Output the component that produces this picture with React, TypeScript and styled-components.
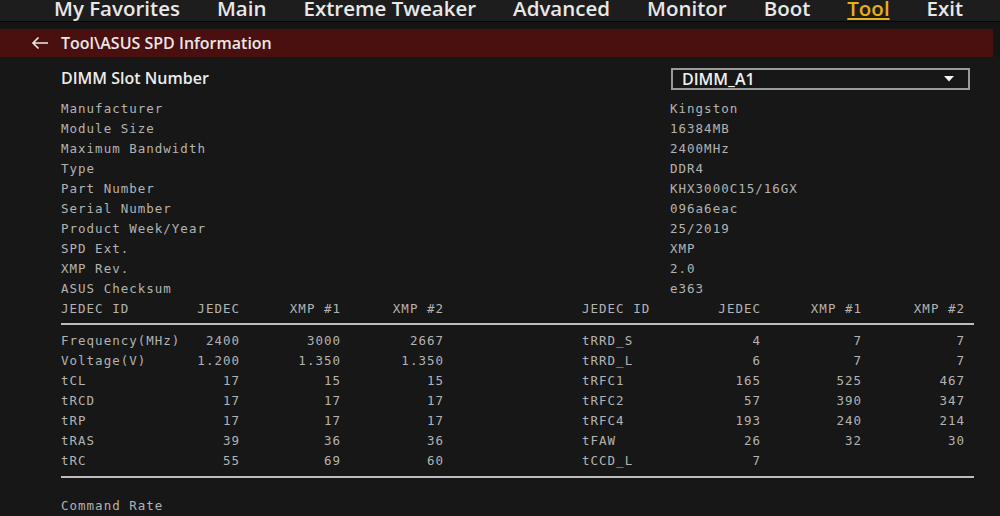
import React from "react";
import styled, { createGlobalStyle } from "styled-components";

const GlobalStyle = createGlobalStyle`
  html, body {
    margin: 0;
    padding: 0;
    background: #171717;
    overflow: hidden;
  }
  * { box-sizing: border-box; }
`;

const Page = styled.div`
  width: 1000px;
  height: 516px;
  background: #171717;
  overflow: hidden;
  display: flex;
  flex-direction: column;
`;

const TopNav = styled.nav`
  height: 22px;
  background: #1d1d1d;
  border-bottom: 1px solid #070707;
  display: flex;
  align-items: flex-start;
  gap: 37px;
  padding-left: 54px;
`;

const NavItem = styled.span<{ $active?: boolean }>`
  font-family: "Open Sans", "Noto Sans", sans-serif;
  font-size: 20.5px;
  font-weight: 600;
  line-height: 16px;
  height: 16px;
  color: ${(p) => (p.$active ? "#e4b116" : "#e8e8e8")};
  text-decoration: ${(p) => (p.$active ? "underline" : "none")};
  text-decoration-thickness: 2px;
  text-underline-offset: 2px;
  white-space: nowrap;
`;

const TitleWrap = styled.div`
  padding: 7px 7px 0 0;
  background: #141414;
`;

const TitleBar = styled.div`
  height: 28px;
  background: #4a0f0f;
  display: flex;
  align-items: center;
  padding-left: 31px;
  gap: 12px;
`;

const Title = styled.span`
  font-family: "Open Sans", "Noto Sans", sans-serif;
  font-size: 16px;
  font-weight: 600;
  color: #ece6e6;
`;

const Content = styled.div`
  padding: 11px 26px 0 61px;
  display: flex;
  flex-direction: column;
`;

const SlotRow = styled.div`
  display: flex;
  align-items: center;
  justify-content: space-between;
  height: 22px;
  margin-bottom: 8px;
`;

const SlotLabel = styled.span`
  font-family: "Open Sans", "Noto Sans", sans-serif;
  font-size: 16px;
  font-weight: 600;
  line-height: 20px;
  margin-top: -3px;
  color: #ececec;
`;

const Select = styled.div`
  width: 299px;
  height: 22px;
  margin-right: 4px;
  border: 2px solid #9a9a9a;
  display: flex;
  align-items: center;
  justify-content: space-between;
  padding: 0 14px 0 9px;
  font-family: "Open Sans", "Noto Sans", sans-serif;
  font-size: 16px;
  font-weight: 600;
  line-height: 18px;
  color: #f0f0f0;
`;

const InfoRow = styled.div`
  display: grid;
  grid-template-columns: 609px 1fr;
  height: 20px;
  align-items: center;
`;

const Mono = styled.span<{ $align?: "left" | "right" }>`
  font-family: "DejaVu Sans Mono", "Liberation Mono", monospace;
  font-size: 12.5px;
  letter-spacing: 1px;
  color: #b3b3b3;
  white-space: nowrap;
  text-align: ${(p) => p.$align ?? "left"};
`;

const TableSection = styled.div`
  display: grid;
  grid-template-columns: 521px 1fr;
`;

const TableRule = styled.div`
  height: 2px;
  background: #bdbdbd;
`;

const Grid = styled.div`
  display: grid;
  grid-template-columns: 120px 59px 101px 103px;
  grid-auto-rows: 20px;
  align-items: center;
`;

const HeaderGrid = styled(Grid)`
  margin-bottom: 5px;
`;

const BodyGrid = styled(Grid)`
  margin-top: 5px;
  margin-bottom: 6px;
`;

const Footer = styled.div`
  margin-top: 17px;
  height: 20px;
  display: flex;
  align-items: center;
`;

const info: [string, string][] = [
  ["Manufacturer", "Kingston"],
  ["Module Size", "16384MB"],
  ["Maximum Bandwidth", "2400MHz"],
  ["Type", "DDR4"],
  ["Part Number", "KHX3000C15/16GX"],
  ["Serial Number", "096a6eac"],
  ["Product Week/Year", "25/2019"],
  ["SPD Ext.", "XMP"],
  ["XMP Rev.", "2.0"],
  ["ASUS Checksum", "e363"],
];

const leftTimings: string[][] = [
  ["Frequency(MHz)", "2400", "3000", "2667"],
  ["Voltage(V)", "1.200", "1.350", "1.350"],
  ["tCL", "17", "15", "15"],
  ["tRCD", "17", "17", "17"],
  ["tRP", "17", "17", "17"],
  ["tRAS", "39", "36", "36"],
  ["tRC", "55", "69", "60"],
];

const rightTimings: string[][] = [
  ["tRRD_S", "4", "7", "7"],
  ["tRRD_L", "6", "7", "7"],
  ["tRFC1", "165", "525", "467"],
  ["tRFC2", "57", "390", "347"],
  ["tRFC4", "193", "240", "214"],
  ["tFAW", "26", "32", "30"],
  ["tCCD_L", "7", "", ""],
];

const headers = ["JEDEC ID", "JEDEC", "XMP #1", "XMP #2"];

const BackArrow = () => (
  <svg width="18" height="14" viewBox="0 0 18 14" fill="none">
    <path d="M17 7H2M7.5 1.5L2 7l5.5 5.5" stroke="#f2eaea" strokeWidth="1.6" />
  </svg>
);

const Caret = () => (
  <svg width="10" height="6" viewBox="0 0 10 6">
    <path d="M0 0h10L5 5.5z" fill="#f4f4f4" />
  </svg>
);

const renderCells = (rows: string[][]) =>
  rows.flatMap((r, i) =>
    r.map((c, j) => (
      <Mono key={`${i}-${j}`} $align={j === 0 ? "left" : "right"}>
        {c}
      </Mono>
    ))
  );

export default function App() {
  const nav = ["My Favorites", "Main", "Extreme Tweaker", "Advanced", "Monitor", "Boot", "Tool", "Exit"];
  return (
    <Page>
      <GlobalStyle />
      <TopNav>
        {nav.map((n) => (
          <NavItem key={n} $active={n === "Tool"}>
            {n}
          </NavItem>
        ))}
      </TopNav>
      <TitleWrap>
        <TitleBar>
          <BackArrow />
          <Title>Tool\ASUS SPD Information</Title>
        </TitleBar>
      </TitleWrap>
      <Content>
        <SlotRow>
          <SlotLabel>DIMM Slot Number</SlotLabel>
          <Select>
            <span>DIMM_A1</span>
            <Caret />
          </Select>
        </SlotRow>
        {info.map(([k, v]) => (
          <InfoRow key={k}>
            <Mono>{k}</Mono>
            <Mono>{v}</Mono>
          </InfoRow>
        ))}
        <TableSection>
          <HeaderGrid>{renderCells([headers])}</HeaderGrid>
          <HeaderGrid>{renderCells([headers])}</HeaderGrid>
        </TableSection>
        <TableRule />
        <TableSection>
          <BodyGrid>{renderCells(leftTimings)}</BodyGrid>
          <BodyGrid>{renderCells(rightTimings)}</BodyGrid>
        </TableSection>
        <TableRule />
        <Footer>
          <Mono>Command Rate</Mono>
        </Footer>
      </Content>
    </Page>
  );
}
